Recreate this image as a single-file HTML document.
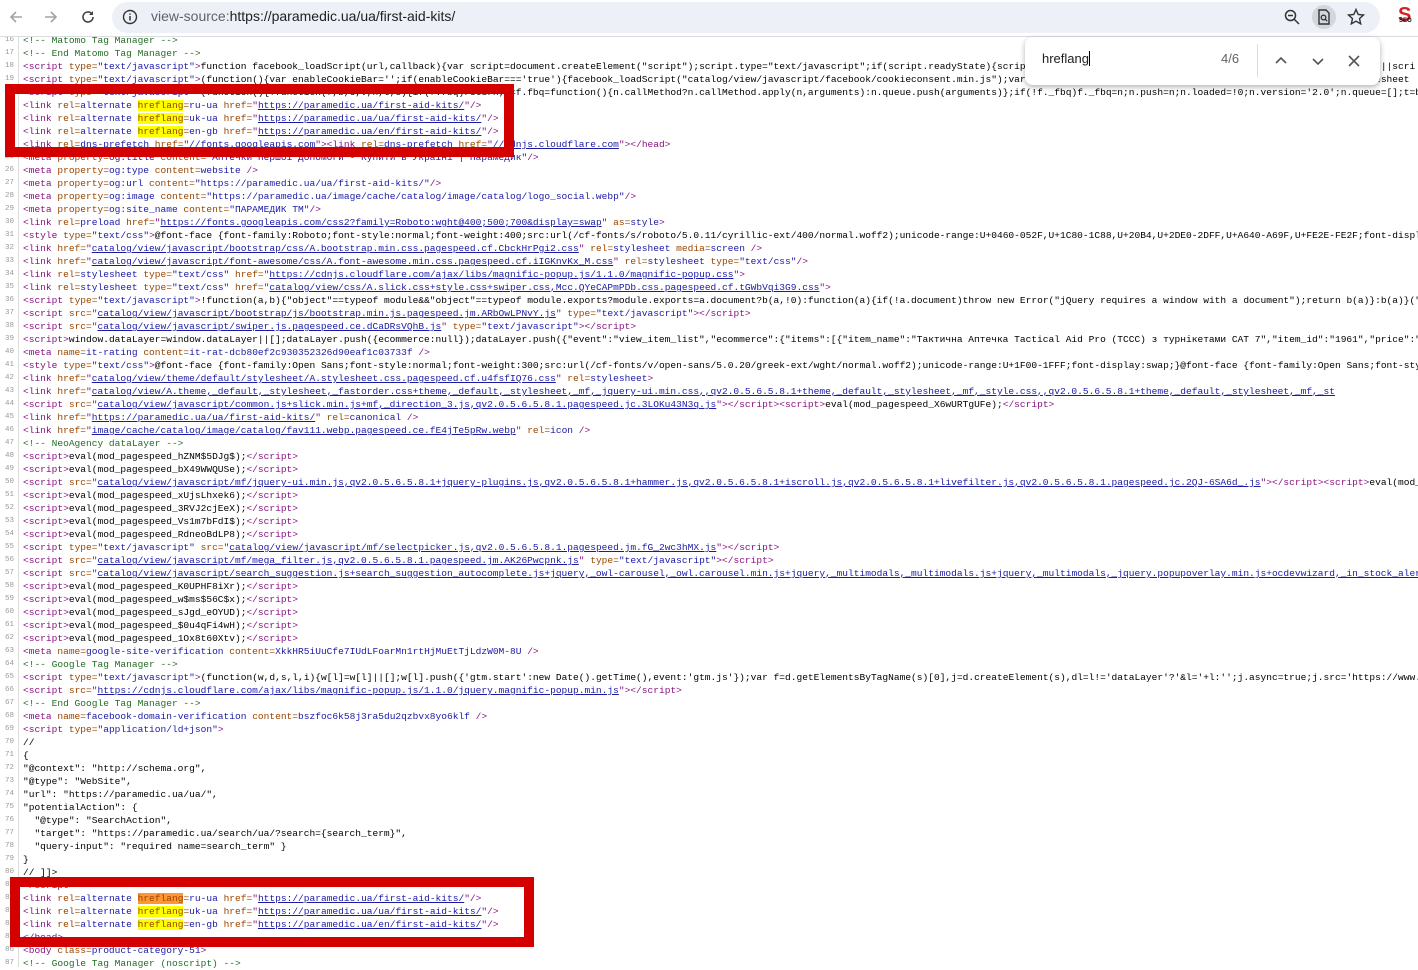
<!DOCTYPE html>
<html><head><meta charset="utf-8"><style>
*{margin:0;padding:0;box-sizing:border-box}
body{width:1418px;height:967px;overflow:hidden;background:#fff;position:relative;font-family:"Liberation Sans",sans-serif}
#bar{position:absolute;left:0;top:0;width:1418px;height:37px;background:#fff;border-bottom:1px solid #dadce0}
#addr{position:absolute;left:112px;top:2px;width:1268px;height:31px;background:#edf0f7;border-radius:16px}
#url{position:absolute;left:151px;top:8px;font-size:14px;color:#202124}
#code{position:absolute;left:0;top:34px;width:1418px;font-family:"Liberation Mono","Noto Sans CJK SC",monospace;font-size:9.55px;line-height:13px;color:#000}
.l{height:13px;position:relative;padding-left:23px;overflow:hidden;white-space:pre}
.n{position:absolute;left:0;width:14px;text-align:right;color:#999;font-size:7.5px}
#gut{position:absolute;left:18px;top:37px;width:1px;height:930px;background:#ddd}
.t{color:#881280}.a{color:#994500}.v{color:#1a1aa6}.c{color:#236e25}
u{color:#1a1aa6}
.h{background:#ff0}.o{background:#ff9632}
.box{position:absolute;border:10px solid #d40000}
#find{position:absolute;left:1025px;top:37px;width:355px;height:48px;background:#fff;border-radius:8px;box-shadow:0 2px 6px rgba(0,0,0,.3)}
</style></head><body>
<div id="code"><div class="l"><span class="n">16</span><span class="c">&lt;!-- Matomo Tag Manager --&gt;</span></div><div class="l"><span class="n">17</span><span class="c">&lt;!-- End Matomo Tag Manager --&gt;</span></div><div class="l"><span class="n">18</span><span class="t">&lt;script <span class="a">type=</span><span class="v">"text/javascript"</span>&gt;</span>function facebook_loadScript(url,callback){var script=document.createElement("script");script.type="text/javascript";if(script.readyState){script.onreadystatechange=function(){if(script.readyState=="loaded"||scri</div><div class="l"><span class="n">19</span><span class="t">&lt;script <span class="a">type=</span><span class="v">"text/javascript"</span>&gt;</span>(function(){var enableCookieBar='';if(enableCookieBar==='true'){facebook_loadScript("catalog/view/javascript/facebook/cookieconsent.min.js");var cookieconsent_stylesheet=document.createElement("link");stylesheet</div><div class="l"><span class="n">20</span><span class="t">&lt;script <span class="a">type=</span><span class="v">"text/javascript"</span>&gt;</span>(function(){!function(f,b,e,v,n,t,s){if(f.fbq)return;n=f.fbq=function(){n.callMethod?n.callMethod.apply(n,arguments):n.queue.push(arguments)};if(!f._fbq)f._fbq=n;n.push=n;n.loaded=!0;n.version='2.0';n.queue=[];t=b</div><div class="l"><span class="n">21</span><span class="t">&lt;link <span class="a">rel=</span><span class="v">alternate</span> <span class="a"><span class="h">hreflang</span>=</span><span class="v">ru-ua</span> <span class="a">href=</span>"<u>https://paramedic.ua/first-aid-kits/</u>"/&gt;</span></div><div class="l"><span class="n">22</span><span class="t">&lt;link <span class="a">rel=</span><span class="v">alternate</span> <span class="a"><span class="h">hreflang</span>=</span><span class="v">uk-ua</span> <span class="a">href=</span>"<u>https://paramedic.ua/ua/first-aid-kits/</u>"/&gt;</span></div><div class="l"><span class="n">23</span><span class="t">&lt;link <span class="a">rel=</span><span class="v">alternate</span> <span class="a"><span class="h">hreflang</span>=</span><span class="v">en-gb</span> <span class="a">href=</span>"<u>https://paramedic.ua/en/first-aid-kits/</u>"/&gt;</span></div><div class="l"><span class="n">24</span><span class="t">&lt;link <span class="a">rel=</span><span class="v">dns-prefetch</span> <span class="a">href=</span>"<u>//fonts.googleapis.com</u>"&gt;&lt;link <span class="a">rel=</span><span class="v">dns-prefetch</span> <span class="a">href=</span>"<u>//cdnjs.cloudflare.com</u>"&gt;&lt;/head&gt;</span></div><div class="l"><span class="n">25</span><span class="t">&lt;meta <span class="a">property=</span><span class="v">og:title</span> <span class="a">content=</span><span class="v">"Аптечки першої допомоги - Купити в Україні | Парамедик"</span>/&gt;</span></div><div class="l"><span class="n">26</span><span class="t">&lt;meta <span class="a">property=</span><span class="v">og:type</span> <span class="a">content=</span><span class="v">website</span> /&gt;</span></div><div class="l"><span class="n">27</span><span class="t">&lt;meta <span class="a">property=</span><span class="v">og:url</span> <span class="a">content=</span><span class="v">"https://paramedic.ua/ua/first-aid-kits/"</span>/&gt;</span></div><div class="l"><span class="n">28</span><span class="t">&lt;meta <span class="a">property=</span><span class="v">og:image</span> <span class="a">content=</span><span class="v">"https://paramedic.ua/image/cache/catalog/image/catalog/logo_social.webp"</span>/&gt;</span></div><div class="l"><span class="n">29</span><span class="t">&lt;meta <span class="a">property=</span><span class="v">og:site_name</span> <span class="a">content=</span><span class="v">"ПАРАМЕДИК ТМ"</span>/&gt;</span></div><div class="l"><span class="n">30</span><span class="t">&lt;link <span class="a">rel=</span><span class="v">preload</span> <span class="a">href=</span>"<u>https://fonts.googleapis.com/css2?family=Roboto:wght@400;500;700&amp;display=swap</u>" <span class="a">as=</span><span class="v">style</span>&gt;</span></div><div class="l"><span class="n">31</span><span class="t">&lt;style <span class="a">type=</span><span class="v">"text/css"</span>&gt;</span>@font-face {font-family:Roboto;font-style:normal;font-weight:400;src:url(/cf-fonts/s/roboto/5.0.11/cyrillic-ext/400/normal.woff2);unicode-range:U+0460-052F,U+1C80-1C88,U+20B4,U+2DE0-2DFF,U+A640-A69F,U+FE2E-FE2F;font-displ</div><div class="l"><span class="n">32</span><span class="t">&lt;link <span class="a">href=</span>"<u>catalog/view/javascript/bootstrap/css/A.bootstrap.min.css.pagespeed.cf.CbckHrPgi2.css</u>" <span class="a">rel=</span><span class="v">stylesheet</span> <span class="a">media=</span><span class="v">screen</span> /&gt;</span></div><div class="l"><span class="n">33</span><span class="t">&lt;link <span class="a">href=</span>"<u>catalog/view/javascript/font-awesome/css/A.font-awesome.min.css.pagespeed.cf.iIGKnvKx_M.css</u>" <span class="a">rel=</span><span class="v">stylesheet</span> <span class="a">type=</span><span class="v">"text/css"</span>/&gt;</span></div><div class="l"><span class="n">34</span><span class="t">&lt;link <span class="a">rel=</span><span class="v">stylesheet</span> <span class="a">type=</span><span class="v">"text/css"</span> <span class="a">href=</span>"<u>https://cdnjs.cloudflare.com/ajax/libs/magnific-popup.js/1.1.0/magnific-popup.css</u>"&gt;</span></div><div class="l"><span class="n">35</span><span class="t">&lt;link <span class="a">rel=</span><span class="v">stylesheet</span> <span class="a">type=</span><span class="v">"text/css"</span> <span class="a">href=</span>"<u>catalog/view/css/A.slick.css+style.css+swiper.css,Mcc.QYeCAPmPDb.css.pagespeed.cf.tGWbVqi3G9.css</u>"&gt;</span></div><div class="l"><span class="n">36</span><span class="t">&lt;script <span class="a">type=</span><span class="v">"text/javascript"</span>&gt;</span>!function(a,b){"object"==typeof module&amp;&amp;"object"==typeof module.exports?module.exports=a.document?b(a,!0):function(a){if(!a.document)throw new Error("jQuery requires a window with a document");return b(a)}:b(a)}("</div><div class="l"><span class="n">37</span><span class="t">&lt;script <span class="a">src=</span>"<u>catalog/view/javascript/bootstrap/js/bootstrap.min.js.pagespeed.jm.ARbOwLPNvY.js</u>" <span class="a">type=</span><span class="v">"text/javascript"</span>&gt;&lt;/script&gt;</span></div><div class="l"><span class="n">38</span><span class="t">&lt;script <span class="a">src=</span>"<u>catalog/view/javascript/swiper.js.pagespeed.ce.dCaDRsVQhB.js</u>" <span class="a">type=</span><span class="v">"text/javascript"</span>&gt;&lt;/script&gt;</span></div><div class="l"><span class="n">39</span><span class="t">&lt;script&gt;</span>window.dataLayer=window.dataLayer||[];dataLayer.push({ecommerce:null});dataLayer.push({"event":"view_item_list","ecommerce":{"items":[{"item_name":"Тактична Аптечка Tactical Aid Pro (TCCC) з турнікетами CAT 7","item_id":"1961","price":"</div><div class="l"><span class="n">40</span><span class="t">&lt;meta <span class="a">name=</span><span class="v">it-rating</span> <span class="a">content=</span><span class="v">it-rat-dcb80ef2c930352326d90eaf1c03733f</span> /&gt;</span></div><div class="l"><span class="n">41</span><span class="t">&lt;style <span class="a">type=</span><span class="v">"text/css"</span>&gt;</span>@font-face {font-family:Open Sans;font-style:normal;font-weight:300;src:url(/cf-fonts/v/open-sans/5.0.20/greek-ext/wght/normal.woff2);unicode-range:U+1F00-1FFF;font-display:swap;}@font-face {font-family:Open Sans;font-sty</div><div class="l"><span class="n">42</span><span class="t">&lt;link <span class="a">href=</span>"<u>catalog/view/theme/default/stylesheet/A.stylesheet.css.pagespeed.cf.u4fsfIQ76.css</u>" <span class="a">rel=</span><span class="v">stylesheet</span>&gt;</span></div><div class="l"><span class="n">43</span><span class="t">&lt;link <span class="a">href=</span>"<u>catalog/view/A.theme,_default,_stylesheet,_fastorder.css+theme,_default,_stylesheet,_mf,_jquery-ui.min.css,,qv2.0.5.6.5.8.1+theme,_default,_stylesheet,_mf,_style.css,,qv2.0.5.6.5.8.1+theme,_default,_stylesheet,_mf,_st</u></span></div><div class="l"><span class="n">44</span><span class="t">&lt;script <span class="a">src=</span>"<u>catalog/view/javascript/common.js+slick.min.js+mf,_direction_3.js,qv2.0.5.6.5.8.1.pagespeed.jc.3LOKu43N3q.js</u>"&gt;&lt;/script&gt;&lt;script&gt;</span>eval(mod_pagespeed_X6wURTgUFe);<span class="t">&lt;/script&gt;</span></div><div class="l"><span class="n">45</span><span class="t">&lt;link <span class="a">href=</span>"<u>https://paramedic.ua/ua/first-aid-kits/</u>" <span class="a">rel=</span><span class="v">canonical</span> /&gt;</span></div><div class="l"><span class="n">46</span><span class="t">&lt;link <span class="a">href=</span>"<u>image/cache/catalog/image/catalog/fav111.webp.pagespeed.ce.fE4jTe5pRw.webp</u>" <span class="a">rel=</span><span class="v">icon</span> /&gt;</span></div><div class="l"><span class="n">47</span><span class="c">&lt;!-- NeoAgency dataLayer --&gt;</span></div><div class="l"><span class="n">48</span><span class="t">&lt;script&gt;</span>eval(mod_pagespeed_hZNM$5DJg$);<span class="t">&lt;/script&gt;</span></div><div class="l"><span class="n">49</span><span class="t">&lt;script&gt;</span>eval(mod_pagespeed_bX49WWQUSe);<span class="t">&lt;/script&gt;</span></div><div class="l"><span class="n">50</span><span class="t">&lt;script <span class="a">src=</span>"<u>catalog/view/javascript/mf/jquery-ui.min.js,qv2.0.5.6.5.8.1+jquery-plugins.js,qv2.0.5.6.5.8.1+hammer.js,qv2.0.5.6.5.8.1+iscroll.js,qv2.0.5.6.5.8.1+livefilter.js,qv2.0.5.6.5.8.1.pagespeed.jc.2QJ-6SA6d_.js</u>"&gt;&lt;/script&gt;&lt;script&gt;</span>eval(mod_</div><div class="l"><span class="n">51</span><span class="t">&lt;script&gt;</span>eval(mod_pagespeed_xUjsLhxek6);<span class="t">&lt;/script&gt;</span></div><div class="l"><span class="n">52</span><span class="t">&lt;script&gt;</span>eval(mod_pagespeed_3RVJ2cjEeX);<span class="t">&lt;/script&gt;</span></div><div class="l"><span class="n">53</span><span class="t">&lt;script&gt;</span>eval(mod_pagespeed_Vs1m7bFdI$);<span class="t">&lt;/script&gt;</span></div><div class="l"><span class="n">54</span><span class="t">&lt;script&gt;</span>eval(mod_pagespeed_RdneoBdLP8);<span class="t">&lt;/script&gt;</span></div><div class="l"><span class="n">55</span><span class="t">&lt;script <span class="a">type=</span><span class="v">"text/javascript"</span> <span class="a">src=</span>"<u>catalog/view/javascript/mf/selectpicker.js,qv2.0.5.6.5.8.1.pagespeed.jm.fG_2wc3hMX.js</u>"&gt;&lt;/script&gt;</span></div><div class="l"><span class="n">56</span><span class="t">&lt;script <span class="a">src=</span>"<u>catalog/view/javascript/mf/mega_filter.js,qv2.0.5.6.5.8.1.pagespeed.jm.AK26Pwcpnk.js</u>" <span class="a">type=</span><span class="v">"text/javascript"</span>&gt;&lt;/script&gt;</span></div><div class="l"><span class="n">57</span><span class="t">&lt;script <span class="a">src=</span>"<u>catalog/view/javascript/search_suggestion.js+search_suggestion_autocomplete.js+jquery,_owl-carousel,_owl.carousel.min.js+jquery,_multimodals,_multimodals.js+jquery,_multimodals,_jquery.popupoverlay.min.js+ocdevwizard,_in_stock_aler</u></span></div><div class="l"><span class="n">58</span><span class="t">&lt;script&gt;</span>eval(mod_pagespeed_K0UPHF8iXr);<span class="t">&lt;/script&gt;</span></div><div class="l"><span class="n">59</span><span class="t">&lt;script&gt;</span>eval(mod_pagespeed_w$ms$56C$x);<span class="t">&lt;/script&gt;</span></div><div class="l"><span class="n">60</span><span class="t">&lt;script&gt;</span>eval(mod_pagespeed_sJgd_eOYUD);<span class="t">&lt;/script&gt;</span></div><div class="l"><span class="n">61</span><span class="t">&lt;script&gt;</span>eval(mod_pagespeed_$0u4qFi4wH);<span class="t">&lt;/script&gt;</span></div><div class="l"><span class="n">62</span><span class="t">&lt;script&gt;</span>eval(mod_pagespeed_1Ox8t60Xtv);<span class="t">&lt;/script&gt;</span></div><div class="l"><span class="n">63</span><span class="t">&lt;meta <span class="a">name=</span><span class="v">google-site-verification</span> <span class="a">content=</span><span class="v">XkkHR5iUuCfe7IUdLFoarMn1rtHjMuEtTjLdzW0M-8U</span> /&gt;</span></div><div class="l"><span class="n">64</span><span class="c">&lt;!-- Google Tag Manager --&gt;</span></div><div class="l"><span class="n">65</span><span class="t">&lt;script <span class="a">type=</span><span class="v">"text/javascript"</span>&gt;</span>(function(w,d,s,l,i){w[l]=w[l]||[];w[l].push({'gtm.start':new Date().getTime(),event:'gtm.js'});var f=d.getElementsByTagName(s)[0],j=d.createElement(s),dl=l!='dataLayer'?'&amp;l='+l:'';j.async=true;j.src='https://www.</div><div class="l"><span class="n">66</span><span class="t">&lt;script <span class="a">src=</span>"<u>https://cdnjs.cloudflare.com/ajax/libs/magnific-popup.js/1.1.0/jquery.magnific-popup.min.js</u>"&gt;&lt;/script&gt;</span></div><div class="l"><span class="n">67</span><span class="c">&lt;!-- End Google Tag Manager --&gt;</span></div><div class="l"><span class="n">68</span><span class="t">&lt;meta <span class="a">name=</span><span class="v">facebook-domain-verification</span> <span class="a">content=</span><span class="v">bszfoc6k58j3ra5du2qzbvx8yo6klf</span> /&gt;</span></div><div class="l"><span class="n">69</span><span class="t">&lt;script <span class="a">type=</span><span class="v">"application/ld+json"</span>&gt;</span></div><div class="l"><span class="n">70</span>//</div><div class="l"><span class="n">71</span>{</div><div class="l"><span class="n">72</span>"@context": "http://schema.org",</div><div class="l"><span class="n">73</span>"@type": "WebSite",</div><div class="l"><span class="n">74</span>"url": "https://paramedic.ua/ua/",</div><div class="l"><span class="n">75</span>"potentialAction": {</div><div class="l"><span class="n">76</span>  "@type": "SearchAction",</div><div class="l"><span class="n">77</span>  "target": "https://paramedic.ua/search/ua/?search={search_term}",</div><div class="l"><span class="n">78</span>  "query-input": "required name=search_term" }</div><div class="l"><span class="n">79</span>}</div><div class="l"><span class="n">80</span>// ]]&gt;</div><div class="l"><span class="n">81</span><span class="t">&lt;/script&gt;</span></div><div class="l"><span class="n">82</span><span class="t">&lt;link <span class="a">rel=</span><span class="v">alternate</span> <span class="a"><span class="o">hreflang</span>=</span><span class="v">ru-ua</span> <span class="a">href=</span>"<u>https://paramedic.ua/first-aid-kits/</u>"/&gt;</span></div><div class="l"><span class="n">83</span><span class="t">&lt;link <span class="a">rel=</span><span class="v">alternate</span> <span class="a"><span class="h">hreflang</span>=</span><span class="v">uk-ua</span> <span class="a">href=</span>"<u>https://paramedic.ua/ua/first-aid-kits/</u>"/&gt;</span></div><div class="l"><span class="n">84</span><span class="t">&lt;link <span class="a">rel=</span><span class="v">alternate</span> <span class="a"><span class="h">hreflang</span>=</span><span class="v">en-gb</span> <span class="a">href=</span>"<u>https://paramedic.ua/en/first-aid-kits/</u>"/&gt;</span></div><div class="l"><span class="n">85</span><span class="t">&lt;/head&gt;</span></div><div class="l"><span class="n">86</span><span class="t">&lt;body <span class="a">class=</span><span class="v">product-category-51</span>&gt;</span></div><div class="l"><span class="n">87</span><span class="c">&lt;!-- Google Tag Manager (noscript) --&gt;</span></div></div>
<div id="gut"></div>
<div class="box" style="left:5px;top:84px;width:509px;height:73px"></div>
<div class="box" style="left:10px;top:877px;width:524px;height:70px"></div>
<div id="bar">
<svg style="position:absolute;left:8px;top:9px" width="16" height="16" viewBox="0 0 16 16"><path d="M14 8H3M8 3L3 8l5 5" stroke="#a0a3a8" stroke-width="1.6" fill="none"/></svg>
<svg style="position:absolute;left:43px;top:9px" width="16" height="16" viewBox="0 0 16 16"><path d="M2 8h11M8 3l5 5-5 5" stroke="#a0a3a8" stroke-width="1.6" fill="none"/></svg>
<svg style="position:absolute;left:80px;top:9px" width="16" height="16" viewBox="0 0 16 16"><path d="M13 8a5 5 0 1 1-1.5-3.6" stroke="#444" stroke-width="1.6" fill="none"/><path d="M13 2v4H9z" fill="#444"/></svg>
<div id="addr"></div>
<svg style="position:absolute;left:122px;top:9px" width="16" height="16" viewBox="0 0 16 16"><circle cx="8" cy="8" r="6.5" stroke="#333" stroke-width="1.4" fill="none"/><path d="M8 7v4.5M8 4.5v1.2" stroke="#333" stroke-width="1.5"/></svg>
<div id="url"><span style="color:#5f6368">view-source:</span>https://paramedic.ua/ua/first-aid-kits/</div>
<svg style="position:absolute;left:1284px;top:9px" width="16" height="16" viewBox="0 0 16 16"><circle cx="6.5" cy="6.5" r="5" stroke="#333" stroke-width="1.5" fill="none"/><path d="M10 10l5 5M4 6.5h5" stroke="#333" stroke-width="1.5"/></svg>
<div style="position:absolute;left:1312px;top:5px;width:24px;height:24px;border-radius:12px;background:#d3d6dc"></div>
<svg style="position:absolute;left:1317px;top:9px" width="14" height="16" viewBox="0 0 14 16"><path d="M2 1h7l3 3v11H2z" stroke="#333" stroke-width="1.4" fill="none"/><circle cx="6.5" cy="8.5" r="2.3" stroke="#333" stroke-width="1.3" fill="none"/><path d="M8.2 10.2l2 2" stroke="#333" stroke-width="1.3"/></svg>
<svg style="position:absolute;left:1347px;top:8px" width="18" height="18" viewBox="0 0 18 18"><path d="M9 1.5l2.2 5 5.3.5-4 3.6 1.2 5.3L9 13.2 4.3 15.9l1.2-5.3-4-3.6 5.3-.5z" stroke="#333" stroke-width="1.4" fill="none"/></svg>
<div style="position:absolute;left:1398px;top:4px;font:bold 20px 'Liberation Sans',sans-serif;color:#d32020">S</div>
<div style="position:absolute;left:1399px;top:18px;font:bold 6px 'Liberation Sans',sans-serif;color:#111">SEO</div>
</div>
<div id="find">
<div style="position:absolute;left:17px;top:14px;font-size:13px;color:#202124">hreflang<span style="display:inline-block;width:1px;height:15px;background:#000;vertical-align:-3px"></span></div>
<div style="position:absolute;left:196px;top:14px;font-size:13px;color:#5f6368">4/6</div>
<div style="position:absolute;left:232px;top:7px;width:1px;height:33px;background:#dadce0"></div>
<svg style="position:absolute;left:249px;top:17px" width="14" height="14" viewBox="0 0 14 14"><path d="M2 9l5-5 5 5" stroke="#555" stroke-width="1.6" fill="none"/></svg>
<svg style="position:absolute;left:286px;top:17px" width="14" height="14" viewBox="0 0 14 14"><path d="M2 5l5 5 5-5" stroke="#555" stroke-width="1.6" fill="none"/></svg>
<svg style="position:absolute;left:322px;top:17px" width="14" height="14" viewBox="0 0 14 14"><path d="M2 2l10 10M12 2L2 12" stroke="#555" stroke-width="1.6"/></svg>
</div>
</body></html>
